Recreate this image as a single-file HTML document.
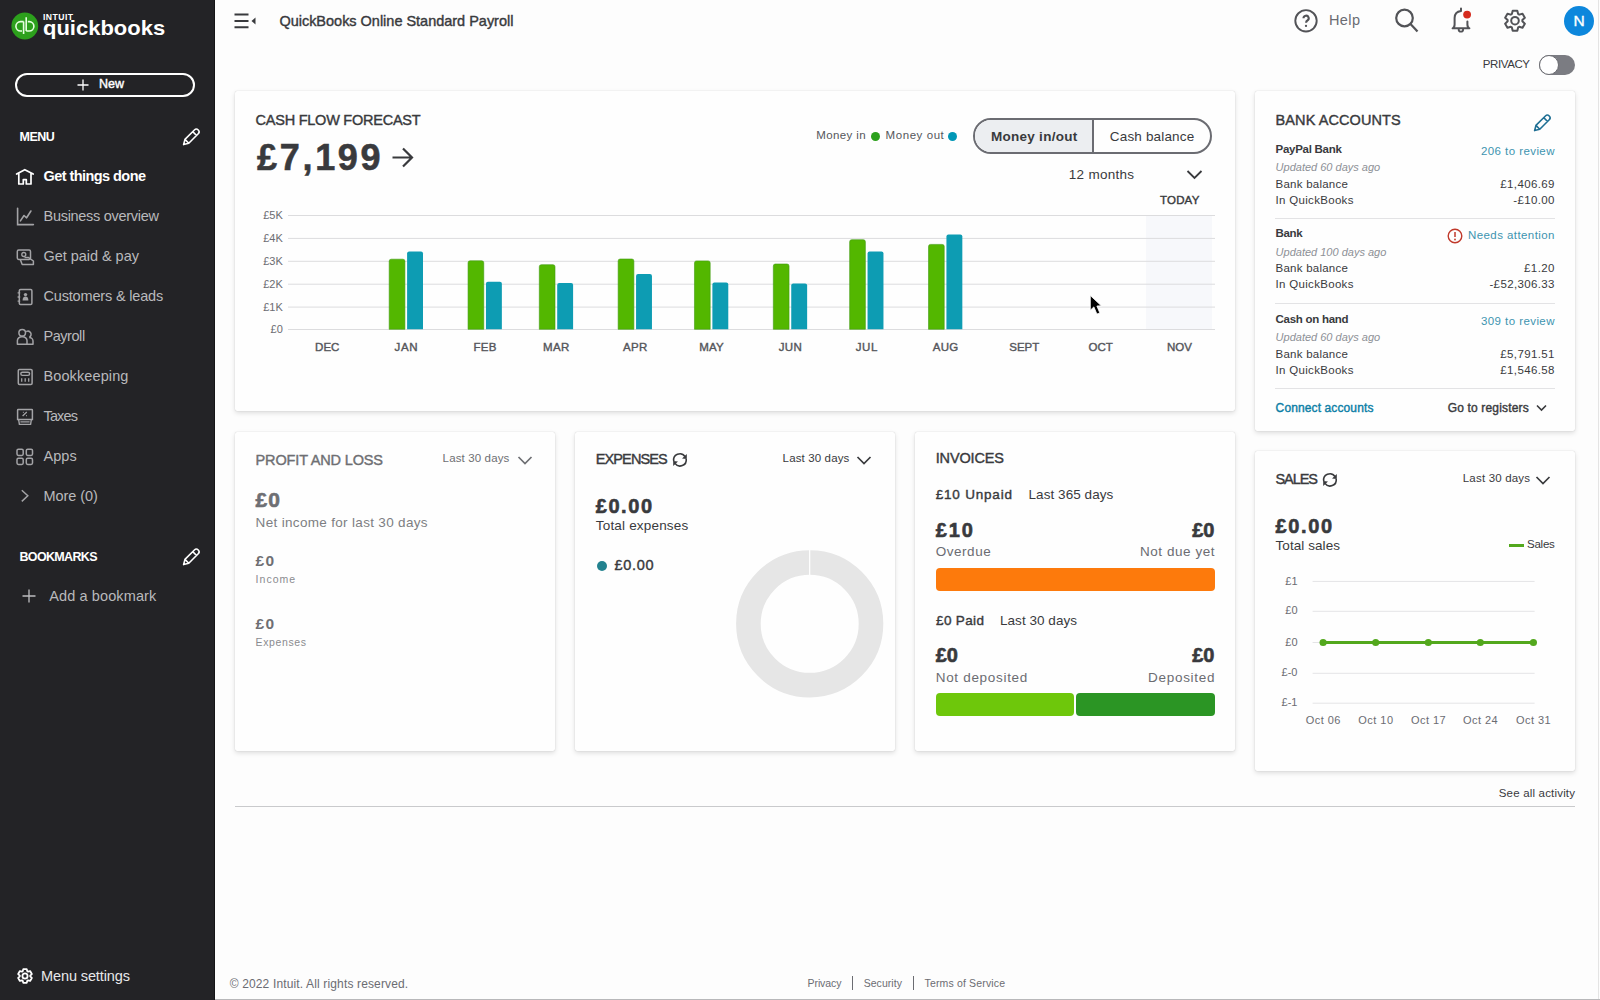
<!DOCTYPE html>
<html><head><meta charset="utf-8"><title>QuickBooks</title>
<style>
html,body{margin:0;padding:0;width:1600px;height:1000px;overflow:hidden;background:#fdfdfd;font-family:"Liberation Sans",sans-serif;}
.t{position:absolute;white-space:nowrap;}
.card{position:absolute;background:#fefefe;border-radius:2px;box-shadow:0 0 1px rgba(0,0,0,0.24),0 2px 5px rgba(0,0,0,0.13);}
svg{overflow:visible}
</style></head><body>
<div style="position:absolute;left:0;top:0;width:215px;height:1000px;background:#232326"></div>
<div style="position:absolute;left:214px;top:0;width:1px;height:1000px;background:#151517"></div>
<svg style="position:absolute;left:0;top:0" width="215" height="60">
<circle cx="24.8" cy="26" r="13.4" fill="#2ca01c"/>
<path d="M23.6 21.6 H20.6 A4.7 4.7 0 0 0 20.6 31 H22 M23.6 21.6 V34" stroke="#e6ffe0" stroke-width="1.6" fill="none"/>
<path d="M26.2 31 H29.2 A4.7 4.7 0 0 0 29.2 21.6 H27.8 M26.2 31 V17.2" stroke="#e6ffe0" stroke-width="1.6" fill="none"/>
</svg>
<div class="t" style="top:13.12px;font-size:8.6px;line-height:8.6px;color:#ffffff;font-weight:700;letter-spacing:0.459px;left:43.00px;">INTUIT</div>
<div class="t" style="top:17.95px;font-size:20.5px;line-height:20.5px;color:#ffffff;font-weight:700;left:42.50px;transform:scaleX(1.072);transform-origin:0 0;">quickbooks</div>
<div style="position:absolute;left:15px;top:73px;width:180px;height:24px;box-sizing:border-box;border:2px solid #fff;border-radius:13px"></div>
<svg style="position:absolute;left:77px;top:79px" width="12" height="12"><path d="M6 0.5v11M0.5 6h11" stroke="#fff" stroke-width="1.3"/></svg>
<div class="t" style="top:78.22px;font-size:12.5px;line-height:12.5px;color:#ffffff;font-weight:400;-webkit-text-stroke:0.4px #ffffff;letter-spacing:-0.002px;left:99.00px;">New</div>
<div class="t" style="top:131.42px;font-size:12.5px;line-height:12.5px;color:#ffffff;font-weight:700;letter-spacing:-0.534px;left:19.50px;">MENU</div>
<svg style="position:absolute;left:182px;top:128px" width="18" height="18"><g transform="translate(1.6,16.6) rotate(-45)"><path d="M0 0 L4.6 -2.7 H18 a2.7 2.7 0 0 1 0 5.4 H4.6 Z M4.6 -2.7 V2.7 M15.6 -2.7 V2.7" stroke="#fff" stroke-width="1.6" fill="none" stroke-linejoin="round"/></g></svg>
<div class="t" style="top:168.73px;font-size:14.5px;line-height:14.5px;color:#ffffff;font-weight:700;letter-spacing:-0.561px;left:43.50px;">Get things done</div>
<div class="t" style="top:208.73px;font-size:14.5px;line-height:14.5px;color:#b9b9bc;font-weight:400;letter-spacing:-0.286px;left:43.50px;">Business overview</div>
<div class="t" style="top:248.73px;font-size:14.5px;line-height:14.5px;color:#b9b9bc;font-weight:400;letter-spacing:-0.040px;left:43.50px;">Get paid &amp; pay</div>
<div class="t" style="top:288.73px;font-size:14.5px;line-height:14.5px;color:#b9b9bc;font-weight:400;letter-spacing:-0.174px;left:43.50px;">Customers &amp; leads</div>
<div class="t" style="top:328.73px;font-size:14.5px;line-height:14.5px;color:#b9b9bc;font-weight:400;letter-spacing:-0.454px;left:43.50px;">Payroll</div>
<div class="t" style="top:368.73px;font-size:14.5px;line-height:14.5px;color:#b9b9bc;font-weight:400;letter-spacing:0.106px;left:43.50px;">Bookkeeping</div>
<div class="t" style="top:408.73px;font-size:14.5px;line-height:14.5px;color:#b9b9bc;font-weight:400;letter-spacing:-0.870px;left:43.50px;">Taxes</div>
<div class="t" style="top:448.73px;font-size:14.5px;line-height:14.5px;color:#b9b9bc;font-weight:400;letter-spacing:0.050px;left:43.50px;">Apps</div>
<div class="t" style="top:488.73px;font-size:14.5px;line-height:14.5px;color:#b9b9bc;font-weight:400;letter-spacing:-0.083px;left:43.50px;">More (0)</div>
<svg style="position:absolute;left:0;top:0" width="215" height="520"><path d="M16.6 174.1 L24.8 169.7 L33.2 174.1 M18.8 173 V184 H23.3 V179.6 H26.3 V184 H31 V173" stroke="#fff" stroke-width="1.7" fill="none" stroke-linejoin="round" stroke-linecap="round"/><path d="M17.6 208.3 V224.6 H33.4" stroke="#a3a3a6" stroke-width="1.6" fill="none" stroke-linecap="round"/><path d="M20.4 220.9 L24 215.5 L26.6 217.8 L30.9 211" stroke="#a3a3a6" stroke-width="1.6" fill="none" stroke-linecap="round" stroke-linejoin="round"/><rect x="17.3" y="250" width="13.2" height="9.4" rx="1.4" stroke="#a3a3a6" stroke-width="1.5" fill="none"/><circle cx="23.8" cy="254.5" r="2" stroke="#a3a3a6" stroke-width="1.3" fill="none"/><path d="M24.5 257.6 H28.6 L33.4 261 V264.4 H22.2 L20.3 259.5" stroke="#a3a3a6" stroke-width="1.5" fill="none" stroke-linejoin="round"/><rect x="19.3" y="289.6" width="12.6" height="14.9" rx="1.2" stroke="#a3a3a6" stroke-width="1.5" fill="none"/><path d="M17.6 292.8 h2.6 M17.6 297 h2.6 M17.6 301.2 h2.6" stroke="#a3a3a6" stroke-width="1.3"/><circle cx="25.5" cy="294.6" r="1.7" fill="#a3a3a6"/><path d="M22.6 300.4 Q22.6 296.6 25.5 296.6 Q28.4 296.6 28.4 300.4 Z" fill="#a3a3a6"/><circle cx="22.2" cy="332.8" r="3.3" stroke="#a3a3a6" stroke-width="1.5" fill="none"/><path d="M17.4 344.2 V340.6 A4.4 3.8 0 0 1 21.8 336.8 H22.6 A4.4 3.8 0 0 1 27 340.6 V344.2 Z" stroke="#a3a3a6" stroke-width="1.5" fill="none" stroke-linejoin="round"/><path d="M26.2 331.6 A2.9 2.9 0 1 1 29.6 337 M27 344.2 H33 V341 A3.8 3.6 0 0 0 29.2 337.4" stroke="#a3a3a6" stroke-width="1.5" fill="none" stroke-linejoin="round"/><rect x="18.3" y="369.4" width="13.8" height="15" rx="1.2" stroke="#a3a3a6" stroke-width="1.5" fill="none"/><rect x="20.8" y="372.2" width="8.8" height="3.2" rx="1.6" stroke="#a3a3a6" stroke-width="1.4" fill="none"/><path d="M21.7 378.2 v3.6 M25.2 378.2 v3.6 M28.7 378.2 v3.6" stroke="#a3a3a6" stroke-width="1.3"/><path d="M18.2 409.6 H31.8 Q32.4 409.6 32.4 410.2 V419.4 H17.6 V410.2 Q17.6 409.6 18.2 409.6 Z" stroke="#a3a3a6" stroke-width="1.5" fill="none"/><path d="M18.6 419.4 L19.4 424.4 H30.6 L31.4 419.4 M20.4 421.9 H29.6" stroke="#a3a3a6" stroke-width="1.4" fill="none"/><path d="M22.6 416 L26.8 412 M22.9 412.3 h0.8 M26.2 415.6 h0.8" stroke="#a3a3a6" stroke-width="1.3"/><rect x="17" y="449.2" width="6.2" height="6.2" rx="1.4" stroke="#a3a3a6" stroke-width="1.5" fill="none"/><rect x="26.3" y="449.2" width="6.2" height="6.2" rx="1.4" stroke="#a3a3a6" stroke-width="1.5" fill="none"/><rect x="17" y="458.3" width="6.2" height="6.2" rx="1.4" stroke="#a3a3a6" stroke-width="1.5" fill="none"/><rect x="26.3" y="458.3" width="6.2" height="6.2" rx="1.4" stroke="#a3a3a6" stroke-width="1.5" fill="none"/><path d="M21.8 490.2 L27.8 495.8 L21.8 501.4" stroke="#a3a3a6" stroke-width="1.5" fill="none"/></svg>
<div class="t" style="top:551.42px;font-size:12.5px;line-height:12.5px;color:#ffffff;font-weight:700;letter-spacing:-0.666px;left:19.50px;">BOOKMARKS</div>
<svg style="position:absolute;left:182px;top:548px" width="18" height="18"><g transform="translate(1.6,16.6) rotate(-45)"><path d="M0 0 L4.6 -2.7 H18 a2.7 2.7 0 0 1 0 5.4 H4.6 Z M4.6 -2.7 V2.7 M15.6 -2.7 V2.7" stroke="#fff" stroke-width="1.6" fill="none" stroke-linejoin="round"/></g></svg>
<svg style="position:absolute;left:22px;top:589px" width="14" height="14"><path d="M7 0.5v13M0.5 7h13" stroke="#bdbdc0" stroke-width="1.3"/></svg>
<div class="t" style="top:588.73px;font-size:14.5px;line-height:14.5px;color:#b9b9bc;font-weight:400;letter-spacing:0.117px;left:49.20px;">Add a bookmark</div>
<svg style="position:absolute;left:0;top:950px" width="50" height="50"><path d="M22.72 21.33 L23.28 19.11 L26.72 19.11 L27.28 21.33 L27.91 21.69 L30.11 21.07 L31.82 24.04 L30.19 25.64 L30.19 26.36 L31.82 27.96 L30.11 30.93 L27.91 30.31 L27.28 30.67 L26.72 32.89 L23.28 32.89 L22.72 30.67 L22.09 30.31 L19.89 30.93 L18.18 27.96 L19.81 26.36 L19.81 25.64 L18.18 24.04 L19.89 21.07 L22.09 21.69 Z" stroke="#fff" stroke-width="1.8" fill="none" stroke-linejoin="round"/><circle cx="25" cy="26" r="2.6" stroke="#fff" stroke-width="1.8" fill="none"/></svg>
<div class="t" style="top:969.23px;font-size:14.5px;line-height:14.5px;color:#e8e8ea;font-weight:400;letter-spacing:-0.106px;left:41.00px;">Menu settings</div>
<svg style="position:absolute;left:233px;top:12px" width="26" height="18"><path d="M1.5 2.6 h14 M1.5 9 h14 M1.5 15.2 h14" stroke="#393a3d" stroke-width="2"/><path d="M22.5 5.5 v7 l-4 -3.5 Z" fill="#393a3d"/></svg>
<div class="t" style="top:13.63px;font-size:14.5px;line-height:14.5px;color:#393a3d;font-weight:400;-webkit-text-stroke:0.4px #393a3d;letter-spacing:-0.016px;left:279.40px;">QuickBooks Online Standard Payroll</div>
<svg style="position:absolute;left:1293px;top:8px" width="26" height="26"><circle cx="13" cy="12.8" r="10.7" stroke="#525357" stroke-width="1.9" fill="none"/><path d="M10.5 10.3 a2.6 2.6 0 1 1 3.9 2.2 c-0.9 0.5 -1.3 1 -1.3 2.2" stroke="#525357" stroke-width="2.1" fill="none"/><circle cx="13" cy="17.9" r="1.15" fill="#525357"/></svg>
<div class="t" style="top:13.23px;font-size:14.5px;line-height:14.5px;color:#6b6c72;font-weight:400;letter-spacing:0.393px;left:1329.00px;">Help</div>
<svg style="position:absolute;left:1393px;top:7px" width="28" height="28"><circle cx="11.5" cy="11" r="8.3" stroke="#525357" stroke-width="2.2" fill="none"/><path d="M17.5 17 L24.5 24.5" stroke="#525357" stroke-width="2.2"/></svg>
<svg style="position:absolute;left:1440px;top:0px" width="40" height="40"><path d="M21 8.6 V11 C17.2 11.5 14.6 14 14.6 18 V24.5 C14.6 26.8 13.8 27.8 12.6 28.3 H29.4 C28.2 27.8 27.4 26.8 27.4 24.5 V21.6" stroke="#525357" stroke-width="2" fill="none" stroke-linecap="round" stroke-linejoin="round"/><path d="M18.7 28.6 v0.8 a2.2 2.2 0 0 0 4.4 0 v-0.8" stroke="#525357" stroke-width="1.9" fill="none"/><circle cx="27.1" cy="14.6" r="3.9" fill="#d52b1e"/></svg>
<svg style="position:absolute;left:1490px;top:0px" width="50" height="42"><path d="M21.87 13.99 L22.68 10.66 L27.32 10.66 L28.13 13.99 L29.24 14.64 L32.53 13.68 L34.85 17.69 L32.37 20.06 L32.37 21.34 L34.85 23.71 L32.53 27.72 L29.24 26.76 L28.13 27.41 L27.32 30.74 L22.68 30.74 L21.87 27.41 L20.76 26.76 L17.47 27.72 L15.15 23.71 L17.63 21.34 L17.63 20.06 L15.15 17.69 L17.47 13.68 L20.76 14.64 Z" stroke="#525357" stroke-width="2" fill="none" stroke-linejoin="round"/><circle cx="25" cy="20.7" r="3.8" stroke="#525357" stroke-width="2" fill="none"/></svg>
<div style="position:absolute;left:1564px;top:5.5px;width:30px;height:30px;border-radius:50%;background:#0d87dc"></div>
<div class="t" style="top:13.38px;font-size:15.5px;line-height:15.5px;color:#ffffff;font-weight:400;-webkit-text-stroke:0.4px #ffffff;left:1573.40px;">N</div>
<div class="t" style="top:58.87px;font-size:11.5px;line-height:11.5px;color:#393a3d;font-weight:400;letter-spacing:-0.397px;left:1482.75px;">PRIVACY</div>
<div style="position:absolute;left:1539px;top:55px;width:36px;height:20px;border-radius:10px;background:#7b7c82"></div>
<div style="position:absolute;left:1539px;top:55px;width:20px;height:20px;box-sizing:border-box;border-radius:50%;background:#fff;border:1.5px solid #6b6c72"></div>
<div class="card" style="left:235px;top:91px;width:1000px;height:320px"></div>
<div class="card" style="left:1255px;top:91px;width:320px;height:340px"></div>
<div class="card" style="left:235px;top:432px;width:320px;height:319px"></div>
<div class="card" style="left:575px;top:432px;width:320px;height:319px"></div>
<div class="card" style="left:915px;top:432px;width:320px;height:319px"></div>
<div class="card" style="left:1255px;top:451px;width:320px;height:320px"></div>
<div class="t" style="top:112.73px;font-size:14.5px;line-height:14.5px;color:#393a3d;font-weight:400;-webkit-text-stroke:0.4px #393a3d;letter-spacing:-0.246px;left:255.60px;">CASH FLOW FORECAST</div>
<div class="t" style="top:140.13px;font-size:36px;line-height:36px;color:#393a3d;font-weight:700;-webkit-text-stroke:0.6px #393a3d;letter-spacing:2.698px;left:257.00px;">£7,199</div>
<svg style="position:absolute;left:390px;top:146px" width="26" height="24"><path d="M2.5 11.5 H22 M13 2.5 L22 11.5 L13 20.5" stroke="#393a3d" stroke-width="2.2" fill="none"/></svg>
<div class="t" style="top:130.27px;font-size:11.5px;line-height:11.5px;color:#55565b;font-weight:400;letter-spacing:0.391px;left:816.25px;">Money in</div>
<div style="position:absolute;left:870.5px;top:131.5px;width:9px;height:9px;border-radius:50%;background:#2ca01c"></div>
<div class="t" style="top:130.27px;font-size:11.5px;line-height:11.5px;color:#55565b;font-weight:400;letter-spacing:0.563px;left:885.60px;">Money out</div>
<div style="position:absolute;left:948.2px;top:131.5px;width:9px;height:9px;border-radius:50%;background:#0097b6"></div>
<div style="position:absolute;left:973px;top:118px;width:239px;height:36px;box-sizing:border-box;border:2px solid #6b6c72;border-radius:18px;overflow:hidden"><div style="position:absolute;left:0;top:0;width:117px;height:32px;background:#eceef1"></div><div style="position:absolute;left:117px;top:0;width:2px;height:32px;background:#6b6c72"></div></div>
<div class="t" style="top:129.57px;font-size:13.5px;line-height:13.5px;color:#393a3d;font-weight:700;letter-spacing:0.287px;left:990.90px;">Money in/out</div>
<div class="t" style="top:129.57px;font-size:13.5px;line-height:13.5px;color:#393a3d;font-weight:400;letter-spacing:0.168px;left:1109.80px;">Cash balance</div>
<div class="t" style="top:168.32px;font-size:13.5px;line-height:13.5px;color:#393a3d;font-weight:400;letter-spacing:0.271px;left:1068.80px;">12 months</div>
<svg style="position:absolute;left:1186px;top:169px" width="18" height="12"><path d="M1.5 2 L8.5 9 L15.5 2" stroke="#393a3d" stroke-width="1.8" fill="none"/></svg>
<div class="t" style="top:195.07px;font-size:11.5px;line-height:11.5px;color:#393a3d;font-weight:400;-webkit-text-stroke:0.4px #393a3d;letter-spacing:0.186px;left:1160.00px;">TODAY</div>
<svg style="position:absolute;left:0;top:0" width="1600" height="1000">
<rect x="1146" y="216" width="66" height="113" fill="#f7f8fb"/>
<rect x="288" y="215.0" width="927" height="1" fill="#dcdcde"/>
<rect x="288" y="237.9" width="927" height="1" fill="#dcdcde"/>
<rect x="288" y="260.8" width="927" height="1" fill="#dcdcde"/>
<rect x="288" y="283.7" width="927" height="1" fill="#dcdcde"/>
<rect x="288" y="306.6" width="927" height="1" fill="#dcdcde"/>
<rect x="288" y="329.0" width="927" height="1" fill="#dcdcde"/>
</svg>
<div class="t" style="top:209.99px;font-size:11px;line-height:11px;color:#6b6c72;font-weight:400;left:263.23px;">£5K</div>
<div class="t" style="top:232.89px;font-size:11px;line-height:11px;color:#6b6c72;font-weight:400;left:263.23px;">£4K</div>
<div class="t" style="top:255.79px;font-size:11px;line-height:11px;color:#6b6c72;font-weight:400;left:263.23px;">£3K</div>
<div class="t" style="top:278.69px;font-size:11px;line-height:11px;color:#6b6c72;font-weight:400;left:263.23px;">£2K</div>
<div class="t" style="top:301.59px;font-size:11px;line-height:11px;color:#6b6c72;font-weight:400;left:263.23px;">£1K</div>
<div class="t" style="top:323.99px;font-size:11px;line-height:11px;color:#6b6c72;font-weight:400;left:270.57px;">£0</div>
<svg style="position:absolute;left:0;top:0" width="1600" height="1000">
<path d="M389.20 329.3 V261.20 q0 -2 2 -2 h11.7 q2 0 2 2 V329.3 Z" fill="#53b700" stroke="#3f9a10" stroke-width="0.6"/>
<path d="M407.10 329.3 V253.50 q0 -2 2 -2 h11.9 q2 0 2 2 V329.3 Z" fill="#0d9cb3"/>
<path d="M468.06 329.3 V262.80 q0 -2 2 -2 h11.7 q2 0 2 2 V329.3 Z" fill="#53b700" stroke="#3f9a10" stroke-width="0.6"/>
<path d="M485.96 329.3 V283.80 q0 -2 2 -2 h11.9 q2 0 2 2 V329.3 Z" fill="#0d9cb3"/>
<path d="M539.30 329.3 V266.70 q0 -2 2 -2 h11.7 q2 0 2 2 V329.3 Z" fill="#53b700" stroke="#3f9a10" stroke-width="0.6"/>
<path d="M557.20 329.3 V285.00 q0 -2 2 -2 h11.9 q2 0 2 2 V329.3 Z" fill="#0d9cb3"/>
<path d="M618.16 329.3 V261.00 q0 -2 2 -2 h11.7 q2 0 2 2 V329.3 Z" fill="#53b700" stroke="#3f9a10" stroke-width="0.6"/>
<path d="M636.06 329.3 V276.00 q0 -2 2 -2 h11.9 q2 0 2 2 V329.3 Z" fill="#0d9cb3"/>
<path d="M694.48 329.3 V262.90 q0 -2 2 -2 h11.7 q2 0 2 2 V329.3 Z" fill="#53b700" stroke="#3f9a10" stroke-width="0.6"/>
<path d="M712.38 329.3 V284.40 q0 -2 2 -2 h11.9 q2 0 2 2 V329.3 Z" fill="#0d9cb3"/>
<path d="M773.34 329.3 V266.00 q0 -2 2 -2 h11.7 q2 0 2 2 V329.3 Z" fill="#53b700" stroke="#3f9a10" stroke-width="0.6"/>
<path d="M791.24 329.3 V285.40 q0 -2 2 -2 h11.9 q2 0 2 2 V329.3 Z" fill="#0d9cb3"/>
<path d="M849.66 329.3 V241.70 q0 -2 2 -2 h11.7 q2 0 2 2 V329.3 Z" fill="#53b700" stroke="#3f9a10" stroke-width="0.6"/>
<path d="M867.56 329.3 V253.50 q0 -2 2 -2 h11.9 q2 0 2 2 V329.3 Z" fill="#0d9cb3"/>
<path d="M928.53 329.3 V246.40 q0 -2 2 -2 h11.7 q2 0 2 2 V329.3 Z" fill="#53b700" stroke="#3f9a10" stroke-width="0.6"/>
<path d="M946.43 329.3 V236.40 q0 -2 2 -2 h11.9 q2 0 2 2 V329.3 Z" fill="#0d9cb3"/>
</svg>
<div class="t" style="top:342.27px;font-size:11.5px;line-height:11.5px;color:#55565b;font-weight:400;-webkit-text-stroke:0.4px #55565b;left:315.10px;">DEC</div>
<div class="t" style="top:342.27px;font-size:11.5px;line-height:11.5px;color:#55565b;font-weight:400;-webkit-text-stroke:0.4px #55565b;letter-spacing:0.640px;left:394.60px;">JAN</div>
<div class="t" style="top:342.27px;font-size:11.5px;line-height:11.5px;color:#55565b;font-weight:400;-webkit-text-stroke:0.4px #55565b;letter-spacing:0.317px;left:473.46px;">FEB</div>
<div class="t" style="top:342.27px;font-size:11.5px;line-height:11.5px;color:#55565b;font-weight:400;-webkit-text-stroke:0.4px #55565b;letter-spacing:0.317px;left:543.10px;">MAR</div>
<div class="t" style="top:342.27px;font-size:11.5px;line-height:11.5px;color:#55565b;font-weight:400;-webkit-text-stroke:0.4px #55565b;letter-spacing:0.317px;left:622.92px;">APR</div>
<div class="t" style="top:342.27px;font-size:11.5px;line-height:11.5px;color:#55565b;font-weight:400;-webkit-text-stroke:0.4px #55565b;letter-spacing:0.216px;left:699.13px;">MAY</div>
<div class="t" style="top:342.27px;font-size:11.5px;line-height:11.5px;color:#55565b;font-weight:400;-webkit-text-stroke:0.4px #55565b;letter-spacing:0.323px;left:778.74px;">JUN</div>
<div class="t" style="top:342.27px;font-size:11.5px;line-height:11.5px;color:#55565b;font-weight:400;-webkit-text-stroke:0.4px #55565b;letter-spacing:0.638px;left:855.70px;">JUL</div>
<div class="t" style="top:342.27px;font-size:11.5px;line-height:11.5px;color:#55565b;font-weight:400;-webkit-text-stroke:0.4px #55565b;letter-spacing:0.317px;left:932.65px;">AUG</div>
<div class="t" style="top:342.27px;font-size:11.5px;line-height:11.5px;color:#55565b;font-weight:400;-webkit-text-stroke:0.4px #55565b;left:1009.27px;">SEPT</div>
<div class="t" style="top:342.27px;font-size:11.5px;line-height:11.5px;color:#55565b;font-weight:400;-webkit-text-stroke:0.4px #55565b;left:1088.47px;">OCT</div>
<div class="t" style="top:342.27px;font-size:11.5px;line-height:11.5px;color:#55565b;font-weight:400;-webkit-text-stroke:0.4px #55565b;left:1167.02px;">NOV</div>
<div class="t" style="top:112.73px;font-size:14.5px;line-height:14.5px;color:#393a3d;font-weight:400;-webkit-text-stroke:0.4px #393a3d;letter-spacing:0.076px;left:1275.60px;">BANK ACCOUNTS</div>
<svg style="position:absolute;left:1533px;top:114px" width="19" height="19"><g transform="translate(1.6,16.6) rotate(-45)"><path d="M0 0 L4.6 -2.7 H18 a2.7 2.7 0 0 1 0 5.4 H4.6 Z M4.6 -2.7 V2.7 M15.6 -2.7 V2.7" stroke="#1f6f94" stroke-width="1.6" fill="none" stroke-linejoin="round"/></g></svg>
<div class="t" style="top:144.07px;font-size:11.5px;line-height:11.5px;color:#393a3d;font-weight:700;letter-spacing:-0.276px;left:1275.60px;">PayPal Bank</div>
<div class="t" style="top:146.07px;font-size:11.5px;line-height:11.5px;color:#3d94b0;font-weight:400;letter-spacing:0.427px;left:1480.97px;">206 to review</div>
<div class="t" style="top:162.49px;font-size:11px;line-height:11px;color:#8d9096;font-weight:400;font-style:italic;left:1275.60px;">Updated 60 days ago</div>
<div class="t" style="top:179.07px;font-size:11.5px;line-height:11.5px;color:#393a3d;font-weight:400;letter-spacing:0.228px;left:1275.60px;">Bank balance</div>
<div class="t" style="top:195.07px;font-size:11.5px;line-height:11.5px;color:#393a3d;font-weight:400;letter-spacing:0.305px;left:1275.60px;">In QuickBooks</div>
<div class="t" style="top:179.07px;font-size:11.5px;line-height:11.5px;color:#393a3d;font-weight:400;letter-spacing:0.384px;left:1500.27px;">£1,406.69</div>
<div class="t" style="top:195.07px;font-size:11.5px;line-height:11.5px;color:#393a3d;font-weight:400;letter-spacing:0.390px;left:1513.16px;">-£10.00</div>
<div class="t" style="top:228.27px;font-size:11.5px;line-height:11.5px;color:#393a3d;font-weight:700;letter-spacing:-0.375px;left:1275.60px;">Bank</div>
<div class="t" style="top:230.27px;font-size:11.5px;line-height:11.5px;color:#3d94b0;font-weight:400;letter-spacing:0.432px;left:1467.91px;">Needs attention</div>
<div class="t" style="top:246.69px;font-size:11px;line-height:11px;color:#8d9096;font-weight:400;font-style:italic;left:1275.60px;">Updated 100 days ago</div>
<div class="t" style="top:263.27px;font-size:11.5px;line-height:11.5px;color:#393a3d;font-weight:400;letter-spacing:0.228px;left:1275.60px;">Bank balance</div>
<div class="t" style="top:279.27px;font-size:11.5px;line-height:11.5px;color:#393a3d;font-weight:400;letter-spacing:0.305px;left:1275.60px;">In QuickBooks</div>
<div class="t" style="top:263.27px;font-size:11.5px;line-height:11.5px;color:#393a3d;font-weight:400;letter-spacing:0.432px;left:1524.00px;">£1.20</div>
<div class="t" style="top:279.27px;font-size:11.5px;line-height:11.5px;color:#393a3d;font-weight:400;letter-spacing:0.368px;left:1489.43px;">-£52,306.33</div>
<div class="t" style="top:313.87px;font-size:11.5px;line-height:11.5px;color:#393a3d;font-weight:700;letter-spacing:-0.276px;left:1275.60px;">Cash on hand</div>
<div class="t" style="top:315.87px;font-size:11.5px;line-height:11.5px;color:#3d94b0;font-weight:400;letter-spacing:0.427px;left:1480.97px;">309 to review</div>
<div class="t" style="top:332.29px;font-size:11px;line-height:11px;color:#8d9096;font-weight:400;font-style:italic;left:1275.60px;">Updated 60 days ago</div>
<div class="t" style="top:348.87px;font-size:11.5px;line-height:11.5px;color:#393a3d;font-weight:400;letter-spacing:0.228px;left:1275.60px;">Bank balance</div>
<div class="t" style="top:364.87px;font-size:11.5px;line-height:11.5px;color:#393a3d;font-weight:400;letter-spacing:0.305px;left:1275.60px;">In QuickBooks</div>
<div class="t" style="top:348.87px;font-size:11.5px;line-height:11.5px;color:#393a3d;font-weight:400;letter-spacing:0.384px;left:1500.27px;">£5,791.51</div>
<div class="t" style="top:364.87px;font-size:11.5px;line-height:11.5px;color:#393a3d;font-weight:400;letter-spacing:0.384px;left:1500.27px;">£1,546.58</div>
<div style="position:absolute;left:1275px;top:218.0px;width:280px;height:1px;background:#e3e3e5"></div>
<div style="position:absolute;left:1275px;top:303.0px;width:280px;height:1px;background:#e3e3e5"></div>
<div style="position:absolute;left:1275px;top:387.5px;width:280px;height:1px;background:#e3e3e5"></div>
<svg style="position:absolute;left:1447px;top:228px" width="16" height="16"><circle cx="8" cy="8" r="6.8" stroke="#c0392b" stroke-width="1.4" fill="none"/><path d="M8 4 v5" stroke="#c0392b" stroke-width="1.5"/><circle cx="8" cy="11.5" r="0.9" fill="#c0392b"/></svg>
<div class="t" style="top:402.14px;font-size:12px;line-height:12px;color:#0d7ea6;font-weight:400;-webkit-text-stroke:0.4px #0d7ea6;letter-spacing:0.116px;left:1275.60px;">Connect accounts</div>
<div class="t" style="top:402.14px;font-size:12px;line-height:12px;color:#393a3d;font-weight:400;-webkit-text-stroke:0.4px #393a3d;letter-spacing:0.164px;left:1447.70px;">Go to registers</div>
<svg style="position:absolute;left:1536px;top:404px" width="12" height="9"><path d="M1 1.5 L5.5 6 L10 1.5" stroke="#393a3d" stroke-width="1.6" fill="none"/></svg>
<div class="t" style="top:452.73px;font-size:14.5px;line-height:14.5px;color:#6e6f73;font-weight:400;-webkit-text-stroke:0.4px #6e6f73;letter-spacing:-0.147px;left:255.60px;">PROFIT AND LOSS</div>
<div class="t" style="top:453.07px;font-size:11.5px;line-height:11.5px;color:#6e6f73;font-weight:400;letter-spacing:0.136px;left:442.60px;">Last 30 days</div>
<svg style="position:absolute;left:517px;top:455px" width="16" height="11"><path d="M1.5 2 L8 8.5 L14.5 2" stroke="#6e6f73" stroke-width="1.7" fill="none"/></svg>
<div class="t" style="top:489.22px;font-size:21px;line-height:21px;color:#6e6f73;font-weight:700;-webkit-text-stroke:0.6px #6e6f73;letter-spacing:1.041px;left:255.60px;">£0</div>
<div class="t" style="top:515.57px;font-size:13.5px;line-height:13.5px;color:#7d7e82;font-weight:400;letter-spacing:0.324px;left:255.60px;">Net income for last 30 days</div>
<div class="t" style="top:552.68px;font-size:15.5px;line-height:15.5px;color:#6e6f73;font-weight:700;letter-spacing:1.259px;left:255.60px;">£0</div>
<div class="t" style="top:573.71px;font-size:10.5px;line-height:10.5px;color:#8a8b8f;font-weight:400;letter-spacing:1.034px;left:255.60px;">Income</div>
<div class="t" style="top:616.28px;font-size:15.5px;line-height:15.5px;color:#6e6f73;font-weight:700;letter-spacing:1.259px;left:255.60px;">£0</div>
<div class="t" style="top:637.11px;font-size:10.5px;line-height:10.5px;color:#8a8b8f;font-weight:400;letter-spacing:0.613px;left:255.60px;">Expenses</div>
<div class="t" style="top:451.73px;font-size:14.5px;line-height:14.5px;color:#393a3d;font-weight:400;-webkit-text-stroke:0.4px #393a3d;letter-spacing:-0.882px;left:595.75px;">EXPENSES</div>
<svg style="position:absolute;left:673px;top:452.7px" width="14" height="14"><path d="M0.8 8.4 A6.2 6.2 0 0 1 12 3.6 M13.2 6 A6.2 6.2 0 0 1 2 10.4" stroke="#393a3d" stroke-width="1.6" fill="none"/><path d="M13.8 1 L13.8 5.9 L9 5.6 Z M0.2 13 L0.2 8.1 L5 8.4 Z" fill="#393a3d"/></svg>
<div class="t" style="top:453.07px;font-size:11.5px;line-height:11.5px;color:#393a3d;font-weight:400;letter-spacing:0.136px;left:782.60px;">Last 30 days</div>
<svg style="position:absolute;left:856px;top:455px" width="16" height="11"><path d="M1.5 2 L8 8.5 L14.5 2" stroke="#393a3d" stroke-width="1.7" fill="none"/></svg>
<div class="t" style="top:495.82px;font-size:20px;line-height:20px;color:#393a3d;font-weight:700;-webkit-text-stroke:0.6px #393a3d;letter-spacing:1.562px;left:595.75px;">£0.00</div>
<div class="t" style="top:518.57px;font-size:13.5px;line-height:13.5px;color:#393a3d;font-weight:400;letter-spacing:0.188px;left:595.75px;">Total expenses</div>
<div style="position:absolute;left:596.8px;top:561px;width:10px;height:10px;border-radius:50%;background:#23828f"></div>
<div class="t" style="top:558.23px;font-size:14.5px;line-height:14.5px;color:#393a3d;font-weight:400;-webkit-text-stroke:0.4px #393a3d;letter-spacing:0.679px;left:614.50px;">£0.00</div>
<svg style="position:absolute;left:0;top:0" width="1600" height="1000"><circle cx="809.7" cy="623.8" r="61.3" stroke="#e6e6e6" stroke-width="24.6" fill="none"/><rect x="809" y="550" width="1.3" height="25" fill="#fefefe"/></svg>
<div class="t" style="top:450.93px;font-size:14.5px;line-height:14.5px;color:#393a3d;font-weight:400;-webkit-text-stroke:0.4px #393a3d;letter-spacing:-0.142px;left:935.70px;">INVOICES</div>
<div class="t" style="top:488.27px;font-size:13.5px;line-height:13.5px;color:#393a3d;font-weight:400;-webkit-text-stroke:0.4px #393a3d;letter-spacing:0.805px;left:935.70px;">£10 Unpaid</div>
<div class="t" style="top:488.27px;font-size:13.5px;line-height:13.5px;color:#393a3d;font-weight:400;letter-spacing:0.062px;left:1028.50px;">Last 365 days</div>
<div class="t" style="top:519.87px;font-size:20px;line-height:20px;color:#393a3d;font-weight:700;-webkit-text-stroke:0.6px #393a3d;letter-spacing:1.865px;left:935.70px;">£10</div>
<div class="t" style="top:519.87px;font-size:20px;line-height:20px;color:#393a3d;font-weight:700;-webkit-text-stroke:0.6px #393a3d;left:1192.25px;">£0</div>
<div class="t" style="top:545.37px;font-size:13.5px;line-height:13.5px;color:#6b6c72;font-weight:400;letter-spacing:0.537px;left:935.70px;">Overdue</div>
<div class="t" style="top:545.37px;font-size:13.5px;line-height:13.5px;color:#6b6c72;font-weight:400;letter-spacing:0.546px;left:1140.00px;">Not due yet</div>
<div style="position:absolute;left:935.5px;top:568px;width:279.5px;height:23px;border-radius:4px;background:#fd7a0c"></div>
<div class="t" style="top:613.57px;font-size:13.5px;line-height:13.5px;color:#393a3d;font-weight:400;-webkit-text-stroke:0.4px #393a3d;letter-spacing:0.369px;left:936.00px;">£0 Paid</div>
<div class="t" style="top:613.57px;font-size:13.5px;line-height:13.5px;color:#393a3d;font-weight:400;letter-spacing:0.041px;left:1000.00px;">Last 30 days</div>
<div class="t" style="top:644.67px;font-size:20px;line-height:20px;color:#393a3d;font-weight:700;-webkit-text-stroke:0.6px #393a3d;left:935.70px;">£0</div>
<div class="t" style="top:644.67px;font-size:20px;line-height:20px;color:#393a3d;font-weight:700;-webkit-text-stroke:0.6px #393a3d;left:1192.25px;">£0</div>
<div class="t" style="top:670.57px;font-size:13.5px;line-height:13.5px;color:#6b6c72;font-weight:400;letter-spacing:0.691px;left:935.70px;">Not deposited</div>
<div class="t" style="top:670.57px;font-size:13.5px;line-height:13.5px;color:#6b6c72;font-weight:400;letter-spacing:0.714px;left:1148.00px;">Deposited</div>
<div style="position:absolute;left:935.5px;top:693px;width:138.5px;height:23px;border-radius:4px;background:#6ec70b"></div>
<div style="position:absolute;left:1076px;top:693px;width:139px;height:23px;border-radius:4px;background:#2b9524"></div>
<div class="t" style="top:471.73px;font-size:14.5px;line-height:14.5px;color:#393a3d;font-weight:400;-webkit-text-stroke:0.4px #393a3d;letter-spacing:-1.063px;left:1275.50px;">SALES</div>
<svg style="position:absolute;left:1323.2px;top:472.7px" width="14" height="14"><path d="M0.8 8.4 A6.2 6.2 0 0 1 12 3.6 M13.2 6 A6.2 6.2 0 0 1 2 10.4" stroke="#393a3d" stroke-width="1.6" fill="none"/><path d="M13.8 1 L13.8 5.9 L9 5.6 Z M0.2 13 L0.2 8.1 L5 8.4 Z" fill="#393a3d"/></svg>
<div class="t" style="top:473.07px;font-size:11.5px;line-height:11.5px;color:#393a3d;font-weight:400;letter-spacing:0.181px;left:1462.80px;">Last 30 days</div>
<svg style="position:absolute;left:1535px;top:475px" width="16" height="11"><path d="M1.5 2 L8 8.5 L14.5 2" stroke="#393a3d" stroke-width="1.7" fill="none"/></svg>
<div class="t" style="top:515.87px;font-size:20px;line-height:20px;color:#393a3d;font-weight:700;-webkit-text-stroke:0.6px #393a3d;letter-spacing:1.613px;left:1275.50px;">£0.00</div>
<div class="t" style="top:538.57px;font-size:13.5px;line-height:13.5px;color:#393a3d;font-weight:400;letter-spacing:0.072px;left:1275.50px;">Total sales</div>
<div style="position:absolute;left:1509px;top:543.5px;width:15px;height:3px;background:#53a81d"></div>
<div class="t" style="top:538.77px;font-size:11.5px;line-height:11.5px;color:#393a3d;font-weight:400;letter-spacing:-0.241px;left:1527.00px;">Sales</div>
<svg style="position:absolute;left:0;top:0" width="1600" height="1000">
<rect x="1312.6" y="580.9" width="222" height="1" fill="#e4e4e6"/>
<rect x="1312.6" y="610.8" width="222" height="1" fill="#e4e4e6"/>
<rect x="1312.6" y="642.0" width="222" height="1" fill="#e4e4e6"/>
<rect x="1312.6" y="672.8" width="222" height="1" fill="#e4e4e6"/>
<rect x="1312.6" y="702.7" width="222" height="1" fill="#e4e4e6"/>
<path d="M1323.1 642.5 H1533.4" stroke="#53a81d" stroke-width="3"/>
<circle cx="1323.1" cy="642.5" r="3.6" fill="#53a81d"/>
<circle cx="1375.7" cy="642.5" r="3.6" fill="#53a81d"/>
<circle cx="1428.3" cy="642.5" r="3.6" fill="#53a81d"/>
<circle cx="1480.3" cy="642.5" r="3.6" fill="#53a81d"/>
<circle cx="1533.4" cy="642.5" r="3.6" fill="#53a81d"/>
</svg>
<div class="t" style="top:575.59px;font-size:11px;line-height:11px;color:#6b6c72;font-weight:400;left:1285.27px;">£1</div>
<div class="t" style="top:605.49px;font-size:11px;line-height:11px;color:#6b6c72;font-weight:400;left:1285.27px;">£0</div>
<div class="t" style="top:636.69px;font-size:11px;line-height:11px;color:#6b6c72;font-weight:400;left:1285.27px;">£0</div>
<div class="t" style="top:667.49px;font-size:11px;line-height:11px;color:#6b6c72;font-weight:400;left:1281.60px;">£-0</div>
<div class="t" style="top:697.39px;font-size:11px;line-height:11px;color:#6b6c72;font-weight:400;left:1281.60px;">£-1</div>
<div class="t" style="top:714.69px;font-size:11px;line-height:11px;color:#6b6c72;font-weight:400;letter-spacing:0.454px;left:1305.76px;">Oct 06</div>
<div class="t" style="top:714.69px;font-size:11px;line-height:11px;color:#6b6c72;font-weight:400;letter-spacing:0.454px;left:1358.36px;">Oct 10</div>
<div class="t" style="top:714.69px;font-size:11px;line-height:11px;color:#6b6c72;font-weight:400;letter-spacing:0.454px;left:1410.96px;">Oct 17</div>
<div class="t" style="top:714.69px;font-size:11px;line-height:11px;color:#6b6c72;font-weight:400;letter-spacing:0.454px;left:1462.96px;">Oct 24</div>
<div class="t" style="top:714.69px;font-size:11px;line-height:11px;color:#6b6c72;font-weight:400;letter-spacing:0.454px;left:1516.06px;">Oct 31</div>
<svg style="position:absolute;left:0;top:0" width="1600" height="1000"><path d="M1090.3 295.5 L1090.3 310.2 L1093.9 306.9 L1096.9 314.1 L1099.8 312.9 L1096.9 306 L1101.3 305.8 Z" fill="#000" stroke="#fff" stroke-width="0.8" stroke-linejoin="round"/></svg>
<div class="t" style="top:787.77px;font-size:11.5px;line-height:11.5px;color:#393a3d;font-weight:400;letter-spacing:0.183px;left:1498.75px;">See all activity</div>
<div style="position:absolute;left:235px;top:806px;width:1340px;height:1px;background:#c9cacc"></div>
<div class="t" style="top:977.64px;font-size:12px;line-height:12px;color:#6b6c72;font-weight:400;letter-spacing:0.144px;left:229.70px;">© 2022 Intuit. All rights reserved.</div>
<div class="t" style="top:977.91px;font-size:10.5px;line-height:10.5px;color:#6b6c72;font-weight:400;letter-spacing:-0.104px;left:807.60px;">Privacy</div>
<div style="position:absolute;left:852px;top:976px;width:1px;height:14px;background:#6b6c72"></div>
<div class="t" style="top:977.91px;font-size:10.5px;line-height:10.5px;color:#6b6c72;font-weight:400;letter-spacing:0.039px;left:863.70px;">Security</div>
<div style="position:absolute;left:913px;top:976px;width:1px;height:14px;background:#6b6c72"></div>
<div class="t" style="top:977.91px;font-size:10.5px;line-height:10.5px;color:#6b6c72;font-weight:400;letter-spacing:0.148px;left:924.60px;">Terms of Service</div>
<div style="position:absolute;left:215px;top:999px;width:1385px;height:1px;background:#b8b8ba"></div>
<div style="position:absolute;left:1598px;top:0;width:1px;height:999px;background:#e4e4e4"></div>
</body></html>
